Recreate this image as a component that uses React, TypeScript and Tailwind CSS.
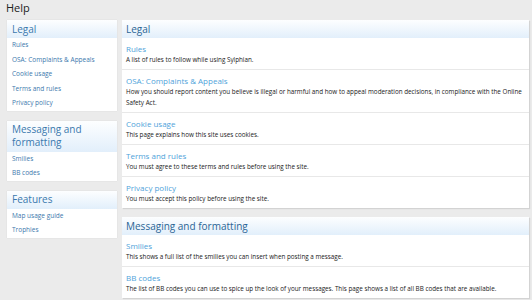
import React from "react";

const font = { fontFamily: '"Open Sans", "Noto Sans", sans-serif' };

function SideBox({ title, links }: { title: React.ReactNode; links: string[] }) {
  return (
    <div className="bg-white shadow-[0_0_1px_rgba(0,0,0,0.12)]">
      <div className="bg-gradient-to-b from-[#fdfeff] to-[#e2effb] px-[5px] py-[2.5px] text-[10px] leading-[13px] text-[#3a78ad]">
        {title}
      </div>
      <div className="flex flex-col">
        {links.map((l) => (
          <div key={l} className="h-[14.5px] px-[5px] text-[6.5px] leading-[14.5px] text-[#3d79ad]">
            {l}
          </div>
        ))}
      </div>
    </div>
  );
}

function MainBox({ title, rows }: { title: string; rows: { t: string; d: string }[] }) {
  return (
    <div className="bg-white shadow-[1px_1px_1px_rgba(0,0,0,0.1)]">
      <div className="bg-gradient-to-b from-[#fdfeff] to-[#e2effb] h-[18px] px-[4px] text-[10px] leading-[18px] text-[#2b6595]">
        {title}
      </div>
      <div className="flex flex-col">
        {rows.map((r, i) => (
          <div
            key={r.t}
            className={"px-[4px] pt-[5px] pb-[4px] " + (i > 0 ? "border-t border-[#e8e8e8]" : "")}
          >
            <div className="text-[8px] leading-[11px] text-[#4fa3da]">{r.t}</div>
            <div className="text-[6.3px] leading-[11px] text-[#1a1a1a]">{r.d}</div>
          </div>
        ))}
      </div>
    </div>
  );
}

export default function App() {
  return (
    <div className="w-[532px] h-[300px] overflow-hidden bg-[#ebebeb]" style={font}>
      <div className="px-[6px] pt-[1px] h-[20px] text-[11px] leading-[14px] text-[#222]">Help</div>
      <div className="flex gap-[5px] pl-[7px] pr-[3px]">
        <div className="w-[110px] flex flex-col gap-[10px] shrink-0">
          <SideBox
            title="Legal"
            links={["Rules", "OSA: Complaints & Appeals", "Cookie usage", "Terms and rules", "Privacy policy"]}
          />
          <SideBox title={<>Messaging and<br />formatting</>} links={["Smilies", "BB codes"]} />
          <SideBox title="Features" links={["Map usage guide", "Trophies"]} />
        </div>
        <div className="w-[407px] flex flex-col gap-[9px]">
          <MainBox
            title="Legal"
            rows={[
              { t: "Rules", d: "A list of rules to follow while using Sylphian." },
              {
                t: "OSA: Complaints & Appeals",
                d: "How you should report content you believe is illegal or harmful and how to appeal moderation decisions, in compliance with the Online Safety Act.",
              },
              { t: "Cookie usage", d: "This page explains how this site uses cookies." },
              { t: "Terms and rules", d: "You must agree to these terms and rules before using the site." },
              { t: "Privacy policy", d: "You must accept this policy before using the site." },
            ]}
          />
          <MainBox
            title="Messaging and formatting"
            rows={[
              { t: "Smilies", d: "This shows a full list of the smilies you can insert when posting a message." },
              {
                t: "BB codes",
                d: "The list of BB codes you can use to spice up the look of your messages. This page shows a list of all BB codes that are available.",
              },
            ]}
          />
        </div>
      </div>
    </div>
  );
}
